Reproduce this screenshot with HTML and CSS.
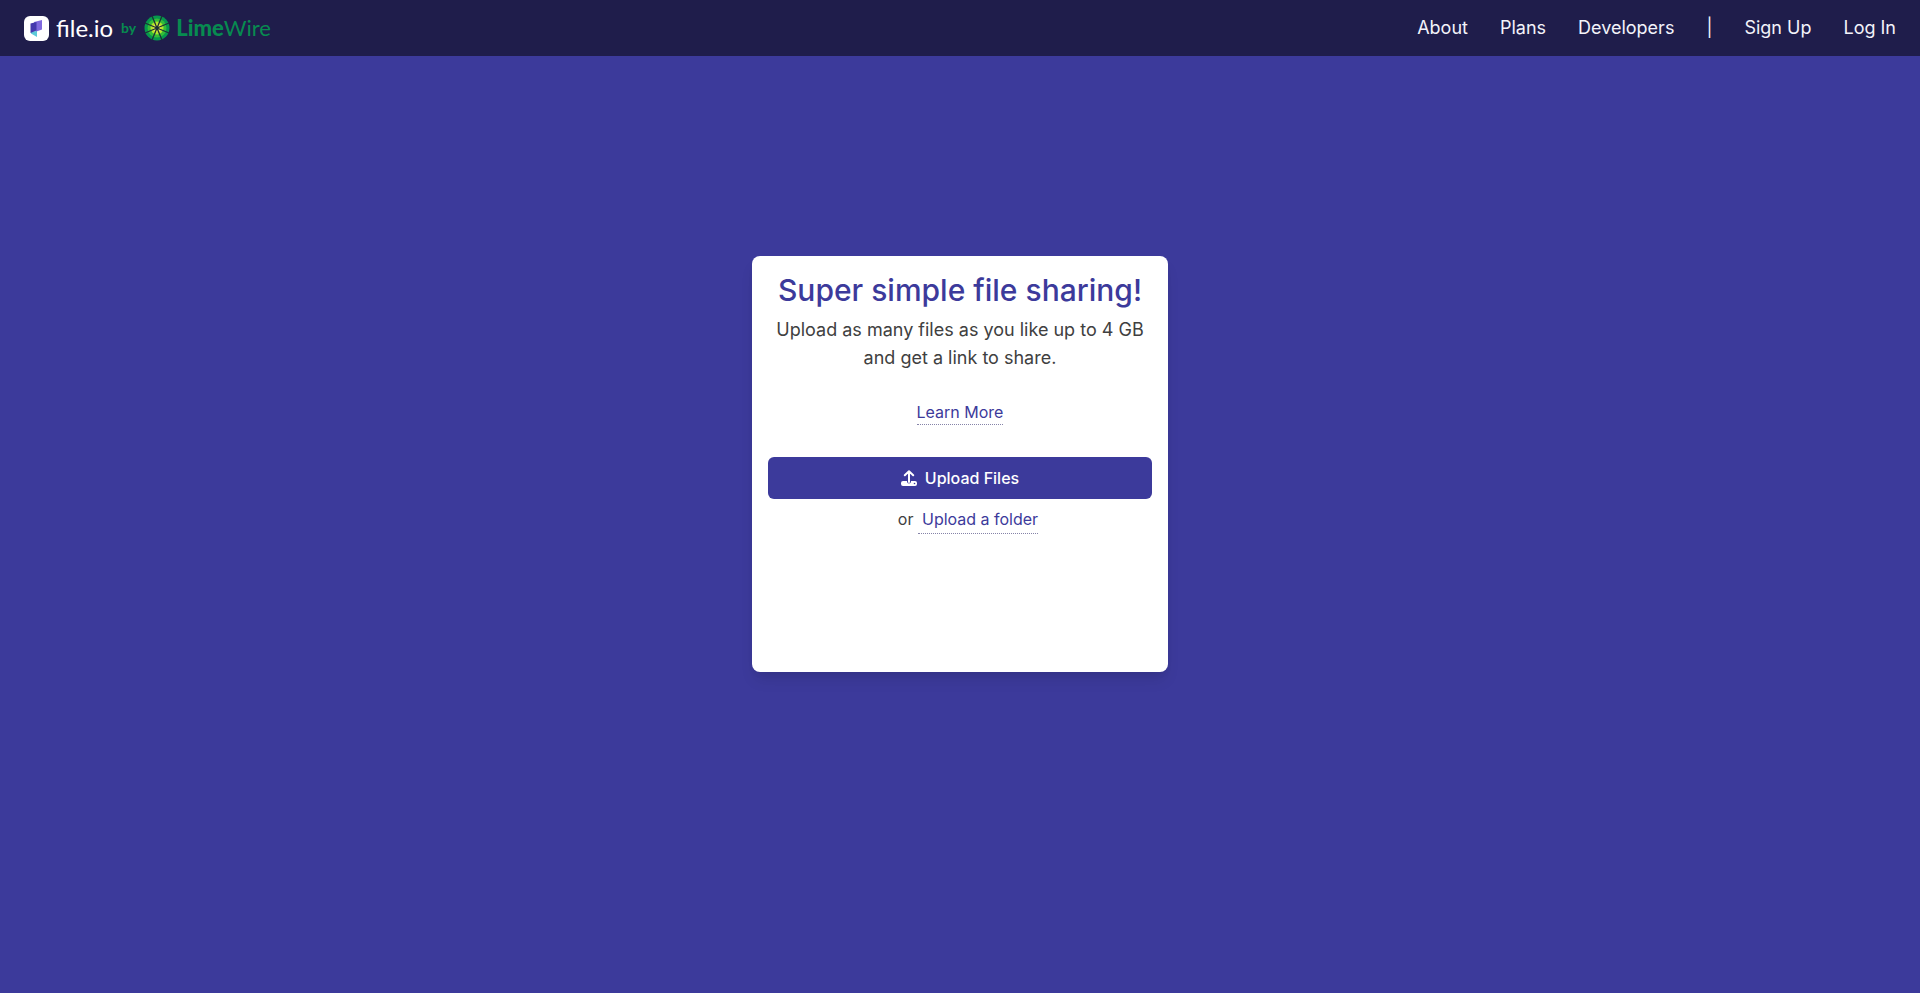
FILE: index.html
```html
<!DOCTYPE html>
<html lang="en">
<head>
<meta charset="utf-8">
<meta name="viewport" content="width=device-width, initial-scale=1">
<title>file.io</title>
<link rel="stylesheet" href="styles.css">
</head>
<body>
<header class="navbar">
  <a class="brand" href="#">
    <svg class="brand-icon" viewBox="0 0 25 25" aria-hidden="true">
      <rect width="25" height="25" rx="6" fill="#fff"/>
      <path d="M7 15.500L13 15V21L7 17.500Z" fill="#5cc9d8"/>
      <path d="M10 6L18 4V13.500L12.500 15.500L10 12Z" fill="#7f69de"/>
      <path d="M6.500 7.500L12.500 6V14.500L6.500 17Z" fill="#4438ad"/>
    </svg>
    <span class="brand-name">file.io</span>
    <span class="brand-by">by</span>
    <svg class="lime-icon" viewBox="-13 -13 26 26" aria-hidden="true">
      <circle r="12.500" fill="#07984c"/>
      <circle r="9.500" fill="#35bd38"/>
      <circle r="6.500" fill="#b4e62b"/>
      <circle r="4" fill="#e8ef45"/>
      <path d="M-5-12L5 12M5-12L-5 12M-12-5L12 5M-12 5L12-5" stroke="#1c3038" stroke-width="1.300"/>
      <circle r="1.800" fill="#1c3038"/>
    </svg>
    <span class="lime-name"><b>Lime</b>Wire</span>
  </a>
  <nav class="menu">
    <a href="#">About</a>
    <a href="#">Plans</a>
    <a href="#">Developers</a>
    <span class="divider">|</span>
    <a href="#">Sign Up</a>
    <a href="#">Log In</a>
  </nav>
</header>
<main class="page">
  <section class="card">
    <h1 class="title">Super simple file sharing!</h1>
    <p class="lead">Upload as many files as you like up to 4 GB and get a link to share.</p>
    <a class="more link" href="#">Learn More</a>
    <button class="upload" type="button">
      <svg class="upload-icon" viewBox="0 0 16 16" aria-hidden="true">
        <path d="M8 12V1.500M3.800 5.200L8 1.200L12.200 5.200" fill="none" stroke="currentColor" stroke-width="2" stroke-linecap="round" stroke-linejoin="round"/>
        <path d="M2 11H6V11.500A2 2 0 0 0 10 11.500V11H14A2 2 0 0 1 16 13V14A2 2 0 0 1 14 16H2A2 2 0 0 1 0 14V13A2 2 0 0 1 2 11Z" fill="currentColor"/>
        <circle cx="13.500" cy="13.500" r=".8" fill="#3c3a9b"/>
      </svg>
      Upload Files
    </button>
    <p class="folder">or <button class="folder-button link" type="button">Upload a folder</button></p>
  </section>
</main>
</body>
</html>
```
FILE: styles.css
```css
* { box-sizing: border-box; }
body {
  margin: 0;
  min-height: 100vh;
  background: #3c3a9b;
  color: #404040;
  font: 16px/24px Inter, "Liberation Sans", sans-serif;
}
h1, p { margin: 0; }
a { color: inherit; text-decoration: none; }
button { font: inherit; border: 0; cursor: pointer; }
.navbar {
  display: flex;
  align-items: center;
  justify-content: space-between;
  min-height: 56px;
  padding: 0 24px;
  background: #1f1d4b;
}
.brand {
  display: flex;
  align-items: center;
  font-family: Lato, sans-serif;
  line-height: 32px;
}
.brand-icon { width: 25px; height: 25px; margin-right: 7px; }
.brand-name { color: #fff; font-size: 24px; }
.brand-by { margin: 0 8px; color: #078b50; font-size: 14px; font-weight: 700; }
.lime-icon { width: 26px; height: 26px; margin-right: 6px; }
.lime-name { color: #078b50; font-size: 22px; }
.lime-name b { font-weight: 900; }
.menu {
  display: flex;
  gap: 32px;
  color: #f3f3fa;
  font-size: 18px;
  line-height: 28px;
}
.page {
  display: flex;
  justify-content: center;
  padding: 200px 16px 32px;
}
.card {
  display: flex;
  flex-direction: column;
  align-items: center;
  width: 100%;
  max-width: 416px;
  min-height: 416px;
  padding: 16px;
  border-radius: 8px;
  background: #fff;
  box-shadow: 0 10px 15px -3px rgba(0, 0, 0, .1), 0 4px 6px -2px rgba(0, 0, 0, .05);
  text-align: center;
}
.title {
  margin-bottom: 8px;
  color: #3c3a9b;
  font-size: 30px;
  font-weight: 500;
  line-height: 36px;
}
.lead { font-size: 18px; line-height: 28px; }
.link { color: #3c3a9b; border-bottom: 1px dotted #8583a8; }
.more { margin: 28px 0 32px; }
.upload {
  display: flex;
  align-items: center;
  justify-content: center;
  gap: 8px;
  width: 100%;
  padding: 9px 16px;
  border-radius: 6px;
  background: #3c3a9b;
  color: #fff;
  font-weight: 500;
}
.upload-icon { width: 16px; height: 16px; }
.folder { margin-top: 8px; padding-left: 16px; }
.folder-button { padding: 0 0 2px 4px; background: none; }
```
